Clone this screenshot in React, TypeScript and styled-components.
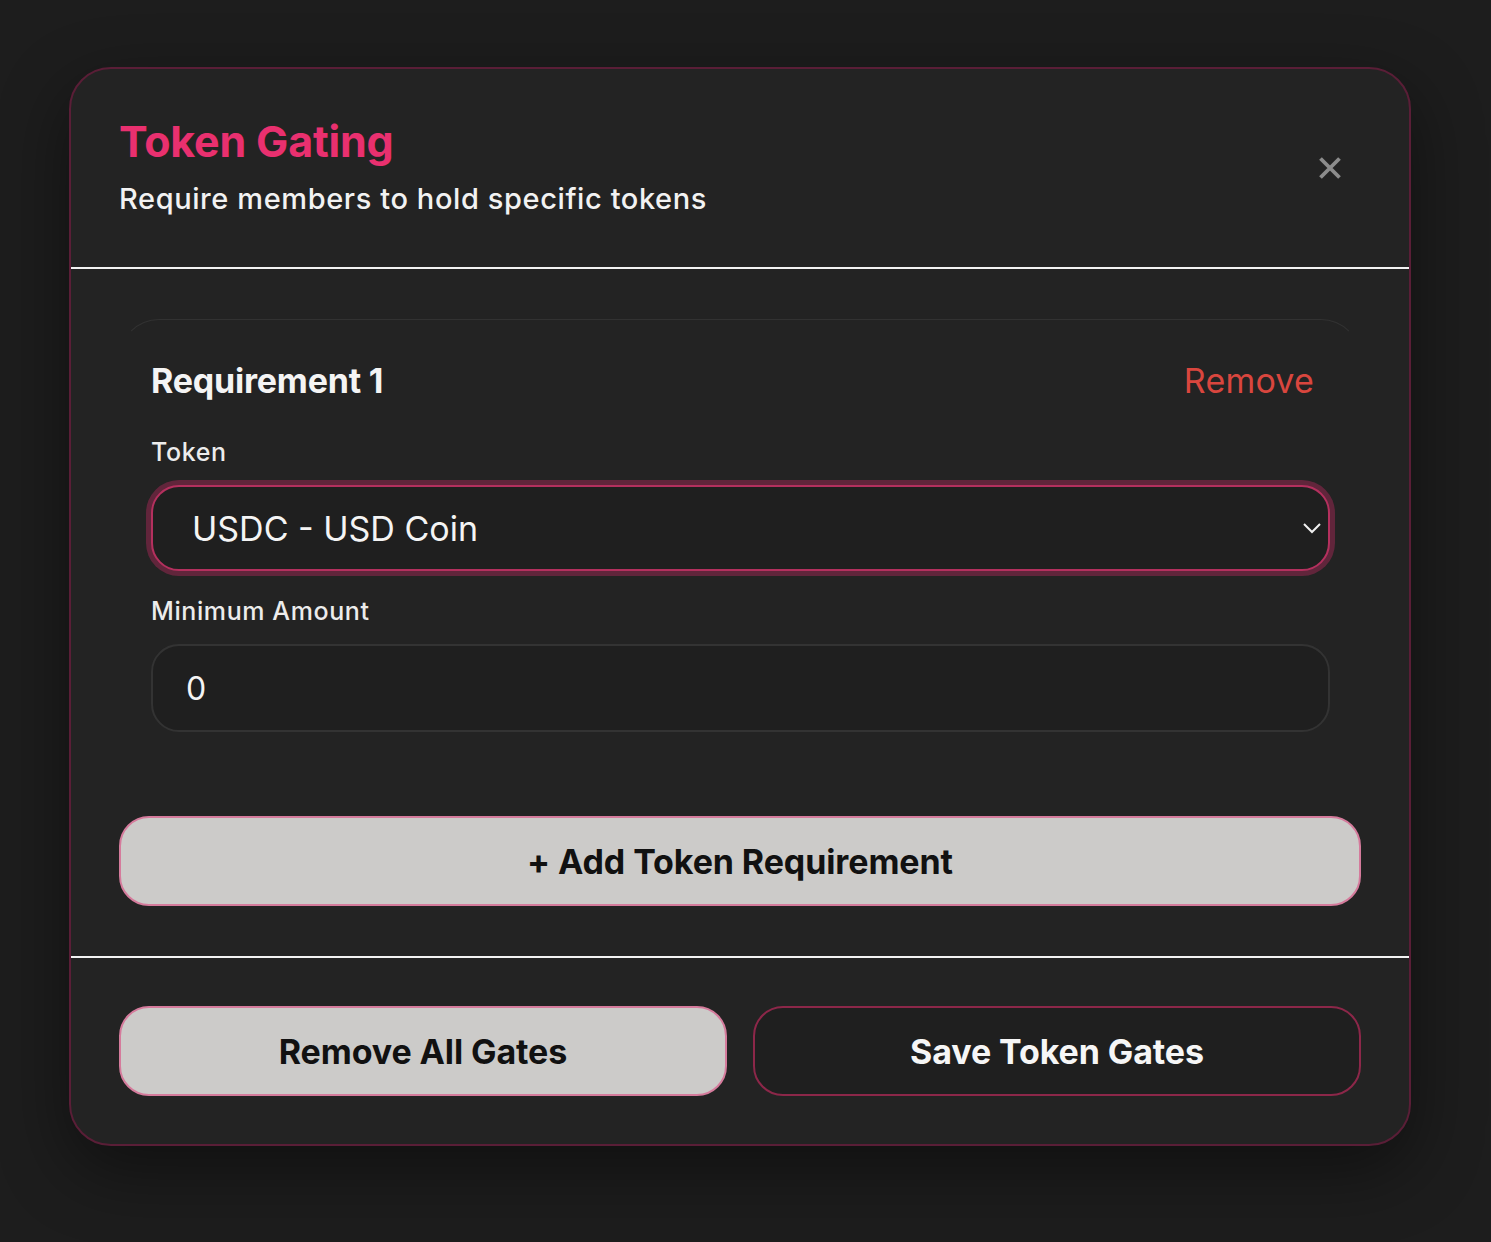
import styled, { createGlobalStyle } from "styled-components";

const GlobalStyle = createGlobalStyle`
  body {
    margin: 0;
    background: #1d1d1d;
    font-family: Inter, "Noto Sans", sans-serif;
  }
`;

const Page = styled.div`
  min-height: 1242px;
  padding: 67px 0 0 69px;
  box-sizing: border-box;
`;

const Modal = styled.div`
  width: 1342px;
  box-sizing: border-box;
  background: #232323;
  border: 2px solid #5a1e37;
  border-radius: 42px;
  box-shadow: 0 24px 70px rgba(0, 0, 0, 0.45);
  overflow: hidden;
`;

const Header = styled.div`
  display: flex;
  justify-content: space-between;
  align-items: center;
  padding: 47px 67px 47px 48px;
  border-bottom: 2px solid #f2f2f2;
`;

const Title = styled.h2`
  margin: 0;
  color: #e9306f;
  font-size: 43px;
  font-weight: 700;
  line-height: 50px;
  letter-spacing: -0.2px;
`;

const Subtitle = styled.p`
  margin: 12px 0 0;
  color: #f2f2f2;
  font-size: 29px;
  line-height: 42px;
  font-weight: 500;
  letter-spacing: 0.6px;
`;

const CloseButton = styled.button`
  display: flex;
  align-items: center;
  justify-content: center;
  width: 24px;
  height: 24px;
  padding: 0;
  border: none;
  background: none;
  color: #8c8c8c;
  cursor: pointer;
`;

const Body = styled.div`
  display: flex;
  flex-direction: column;
  gap: 50px;
  padding: 50px 48px;
  border-bottom: 2px solid #f2f2f2;
`;

const Card = styled.div`
  display: flex;
  flex-direction: column;
  padding: 38px 30px 33px 31px;
  border: 1px solid;
  border-color: #323232 transparent transparent;
  border-radius: 40px;
`;

const CardHead = styled.div`
  display: flex;
  justify-content: space-between;
  align-items: center;
  height: 44px;
  margin-bottom: 36px;
  padding-right: 16px;
`;

const CardTitle = styled.h3`
  margin: 0;
  color: #f4f4f4;
  font-size: 34px;
  font-weight: 700;
  letter-spacing: -0.2px;
`;

const RemoveLink = styled.button`
  border: none;
  background: none;
  padding: 0;
  color: #d9463e;
  font-family: inherit;
  font-size: 34px;
  font-weight: 400;
  letter-spacing: 0.2px;
  cursor: pointer;
`;

const Field = styled.div<{ spaced?: boolean }>`
  display: flex;
  flex-direction: column;
  gap: 19px;
  margin-top: ${(p) => (p.spaced ? "26px" : "0")};
`;

const Label = styled.label`
  color: #ececec;
  font-size: 25px;
  line-height: 28px;
  font-weight: 500;
  letter-spacing: 0.6px;
`;

const SelectTrigger = styled.button`
  display: flex;
  align-items: center;
  justify-content: space-between;
  height: 86px;
  padding: 0 6px 0 39px;
  background: #1f1f1f;
  border: 2px solid #b4305e;
  border-radius: 28px;
  box-shadow: 0 0 0 5px rgba(150, 40, 80, 0.55);
  color: #f4f4f4;
  font-family: inherit;
  font-size: 34px;
  font-weight: 400;
  cursor: pointer;
`;

const AmountInput = styled.input`
  height: 88px;
  box-sizing: border-box;
  padding: 0 33px;
  background: #1f1f1f;
  border: 2px solid #333;
  border-radius: 28px;
  color: #f4f4f4;
  font-family: inherit;
  font-size: 32px;
  outline: none;
`;

const PillButton = styled.button<{ variant: "light" | "dark" }>`
  height: 90px;
  border-radius: 30px;
  border: 2px solid
    ${(p) => (p.variant === "light" ? "#d57b9c" : "#8c2749")};
  background: ${(p) => (p.variant === "light" ? "#cccbc9" : "#1f1f1f")};
  color: ${(p) => (p.variant === "light" ? "#111" : "#f6f6f6")};
  font-family: inherit;
  font-size: 34px;
  font-weight: 700;
  letter-spacing: -0.1px;
  cursor: pointer;
`;

const Footer = styled.div`
  display: grid;
  grid-template-columns: 1fr 1fr;
  gap: 26px;
  padding: 48px 48px 48px;
`;

const App = () => {
  return (
    <>
      <GlobalStyle />
      <Page>
        <Modal>
          <Header>
            <div>
              <Title>Token Gating</Title>
              <Subtitle>Require members to hold specific tokens</Subtitle>
            </div>
            <CloseButton aria-label="Close">
              <svg width="24" height="24" viewBox="0 0 24 24">
                <path
                  d="M2.5 2.5 L21.5 21.5 M21.5 2.5 L2.5 21.5"
                  stroke="currentColor"
                  strokeWidth="3.8"
                  fill="none"
                />
              </svg>
            </CloseButton>
          </Header>
          <Body>
            <Card>
              <CardHead>
                <CardTitle>Requirement 1</CardTitle>
                <RemoveLink>Remove</RemoveLink>
              </CardHead>
              <Field>
                <Label>Token</Label>
                <SelectTrigger>
                  <span>USDC - USD Coin</span>
                  <svg width="20" height="12" viewBox="0 0 20 12">
                    <path
                      d="M2 2 L10 10 L18 2"
                      stroke="#f0f0f0"
                      strokeWidth="2"
                      fill="none"
                    />
                  </svg>
                </SelectTrigger>
              </Field>
              <Field spaced>
                <Label>Minimum Amount</Label>
                <AmountInput value="0" readOnly />
              </Field>
            </Card>
            <PillButton variant="light">+ Add Token Requirement</PillButton>
          </Body>
          <Footer>
            <PillButton variant="light">Remove All Gates</PillButton>
            <PillButton variant="dark">Save Token Gates</PillButton>
          </Footer>
        </Modal>
      </Page>
    </>
  );
};

export default App;
